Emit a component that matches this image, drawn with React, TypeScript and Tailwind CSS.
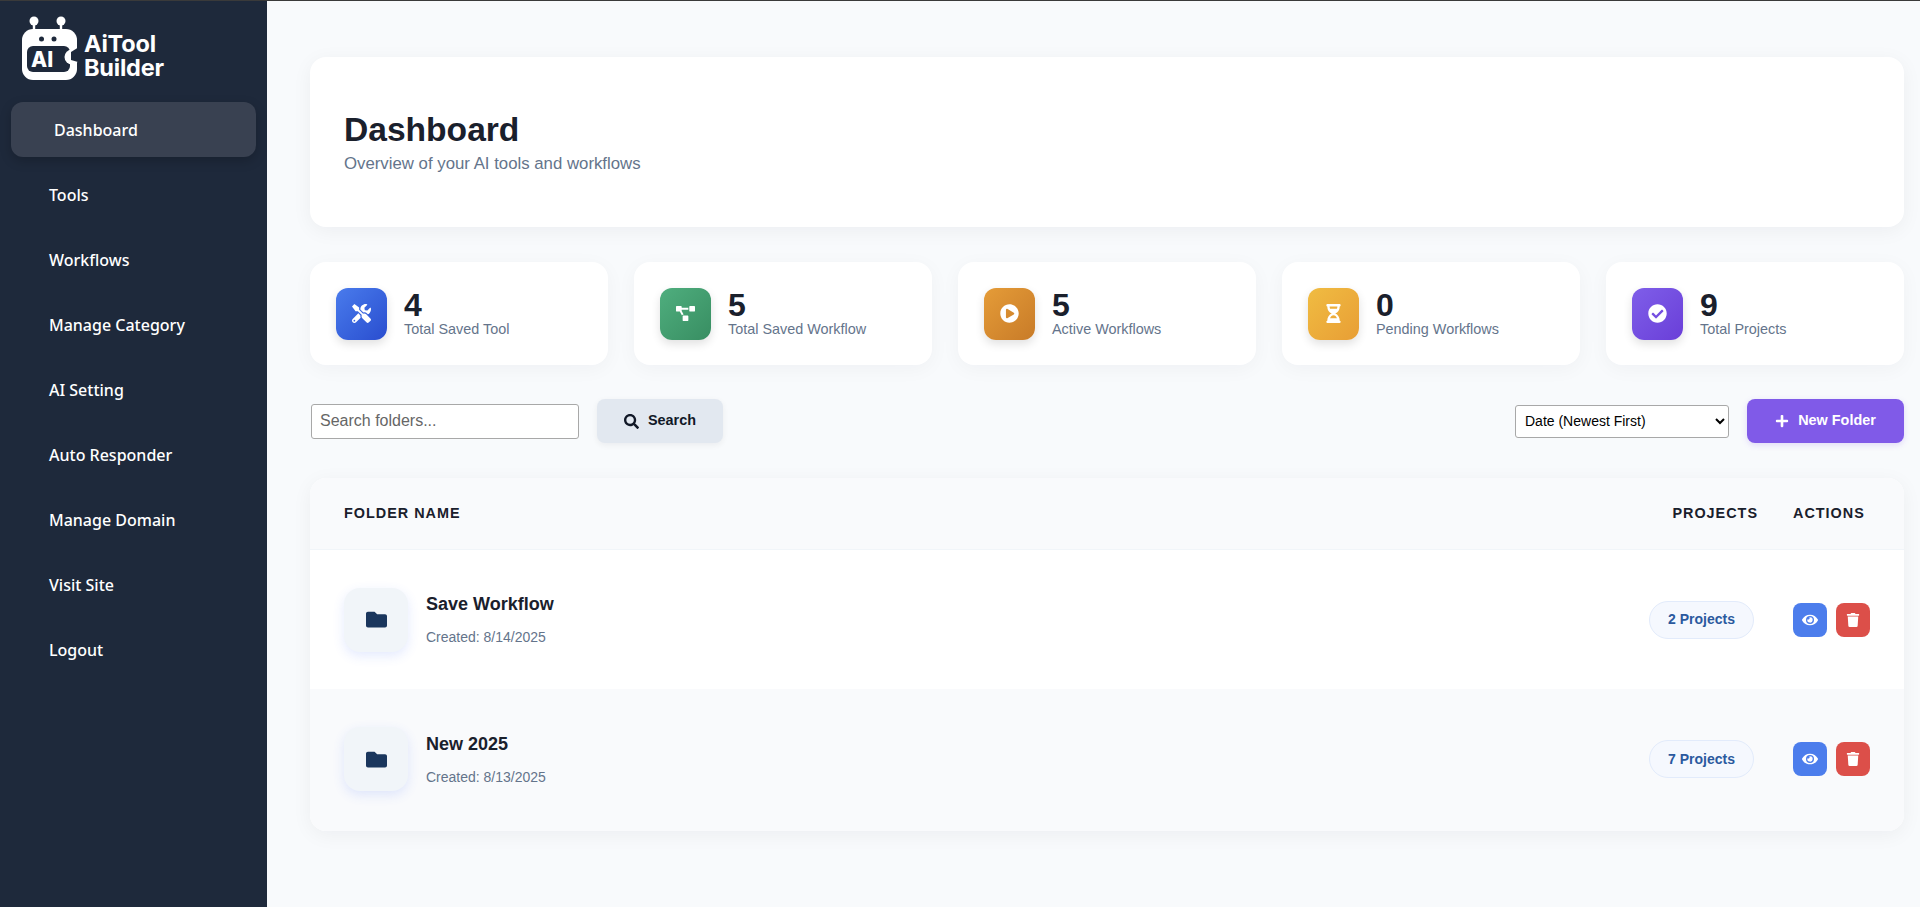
import { FaCheckCircle, FaEye, FaFolder, FaHourglassHalf, FaPlayCircle, FaPlus, FaProjectDiagram, FaSearch, FaTools, FaTrash } from 'react-icons/fa'

const navItems = ['Tools', 'Workflows', 'Manage Category', 'AI Setting', 'Auto Responder', 'Manage Domain', 'Visit Site', 'Logout']

const stats = [
  { value: '4', label: 'Total Saved Tool', icon: <FaTools className="h-[19px] w-[19px]" />, color: 'bg-gradient-to-br from-[#4a7bec] to-[#2a4dcf]' },
  { value: '5', label: 'Total Saved Workflow', icon: <FaProjectDiagram className="h-[19px] w-[19px]" />, color: 'bg-gradient-to-br from-[#4fae7e] to-[#388e62]' },
  { value: '5', label: 'Active Workflows', icon: <FaPlayCircle className="h-[19px] w-[19px]" />, color: 'bg-gradient-to-br from-[#e59c38] to-[#c87b28]' },
  { value: '0', label: 'Pending Workflows', icon: <FaHourglassHalf className="h-[19px] w-[19px]" />, color: 'bg-gradient-to-br from-[#f0bc42] to-[#e89e35]' },
  { value: '9', label: 'Total Projects', icon: <FaCheckCircle className="h-[19px] w-[19px]" />, color: 'bg-gradient-to-br from-[#7f5ee9] to-[#6a3ed8]' },
]

const folders = [
  { name: 'Save Workflow', created: 'Created: 8/14/2025', projects: '2 Projects', rowClass: 'bg-white h-[139px]' },
  { name: 'New 2025', created: 'Created: 8/13/2025', projects: '7 Projects', rowClass: 'bg-[#f9fafc] h-[142px] pb-[2px]' },
]

function Logo() {
  return (
    <div className="flex h-[101px] items-start pl-[22px] pt-[14px]">
      <svg width="58" height="66" viewBox="0 0 58 66" className="shrink-0">
        <circle cx="12" cy="6" r="4.5" fill="#fff" />
        <circle cx="39" cy="6" r="4.5" fill="#fff" />
        <rect x="10.8" y="8" width="2.4" height="8" fill="#fff" />
        <rect x="37.8" y="8" width="2.4" height="8" fill="#fff" />
        <rect x="0" y="14" width="55" height="51" rx="11" fill="#fff" />
        <circle cx="19.5" cy="24" r="2.5" fill="#1e293b" />
        <circle cx="32" cy="24" r="2.5" fill="#1e293b" />
        <rect x="5" y="31" width="43" height="26" rx="6" fill="#1e293b" />
        <circle cx="50" cy="42" r="7.5" fill="#fff" />
        <path d="M57 32 L49 37 L49 45 L56 47 L58 46 L58 32 Z" fill="#1e293b" />
        <text x="9" y="52" fill="#fff" fontFamily="Inter, sans-serif" fontSize="21" fontWeight="800">AI</text>
      </svg>
      <div className="ml-[4px] mt-[17px] text-[23.5px] font-bold leading-[24px] tracking-[-0.2px] text-white font-['Inter',sans-serif]">
        <div>AiTool</div>
        <div>Builder</div>
      </div>
    </div>
  )
}

function Sidebar() {
  return (
    <aside className="flex w-[267px] shrink-0 flex-col bg-[#1e293b] font-['Noto_Sans',sans-serif] text-[16px] font-medium text-white">
      <Logo />
      <nav className="flex flex-col">
        <a className="mx-[11px] flex h-[55px] items-center rounded-xl bg-[#394151] pl-[43px] shadow-[0_4px_12px_rgba(0,0,0,0.2)]">Dashboard</a>
        {navItems.map((item) => (
          <a key={item} className="mt-[10px] flex h-[55px] items-center pl-[49px] first:mt-[11px]">
            {item}
          </a>
        ))}
      </nav>
    </aside>
  )
}

function StatCard({ value, label, icon, color }: (typeof stats)[number]) {
  return (
    <div className="flex h-[103px] items-center gap-[17px] rounded-2xl bg-white pl-[26px] shadow-[0_4px_20px_rgba(15,23,42,0.04)]">
      <div className={`flex h-[52px] w-[51px] items-center justify-center rounded-xl text-white shadow-[0_4px_10px_rgba(0,0,0,0.12)] ${color}`}>
        {icon}
      </div>
      <div className="flex flex-col">
        <span className="text-[32px] font-bold leading-[32px] text-[#1a202c]">{value}</span>
        <span className="text-[14.4px] leading-[17px] text-[#64748b]">{label}</span>
      </div>
    </div>
  )
}

function FolderRow({ name, created, projects, rowClass }: (typeof folders)[number]) {
  return (
    <div className={`flex items-center pl-[34px] pr-[34px] ${rowClass}`}>
      <div className="flex h-[64px] w-[64px] items-center justify-center rounded-2xl bg-[#f1f5f9] text-[#1a365d] shadow-[0_4px_12px_rgba(66,108,245,0.14)]">
        <FaFolder className="h-[21px] w-[21px]" />
      </div>
      <div className="ml-[18px] flex-1">
        <div className="text-[18px] font-bold leading-[21px] text-[#1a202c]">{name}</div>
        <div className="mt-[14px] text-[14px] leading-[16px] text-[#64748b]">{created}</div>
      </div>
      <div className="w-[109px]">
        <span className="flex h-[38px] w-[105px] items-center justify-center rounded-full border border-[#e2ebfb] bg-[#f5f8fe] text-[14px] font-bold text-[#2b5a9e]">
          {projects}
        </span>
      </div>
      <div className="ml-[35px] flex w-[77px] gap-[9px]">
        <button className="flex h-[34px] w-[34px] items-center justify-center rounded-lg bg-[#4c7dec] text-white">
          <FaEye className="h-[16px] w-[16px]" />
        </button>
        <button className="flex h-[34px] w-[34px] items-center justify-center rounded-lg bg-[#dc4f49] text-white">
          <FaTrash className="h-[14px] w-[14px]" />
        </button>
      </div>
    </div>
  )
}

export default function App() {
  return (
    <div className="flex h-[907px] flex-col overflow-hidden bg-[#f8fafc] font-['Liberation_Sans',Arial,sans-serif]">
      <div className="h-px w-full shrink-0 bg-[#3a3a3a]" />
      <div className="flex flex-1">
        <Sidebar />
        <main className="flex-1 pl-[43px] pr-[16px] pt-[56px]">
          <section className="flex h-[170px] flex-col justify-center rounded-2xl bg-white px-[34px] shadow-[0_4px_20px_rgba(15,23,42,0.05)]">
            <h1 className="text-[33.6px] font-bold leading-[40px] text-[#1a202c]">Dashboard</h1>
            <p className="mt-[4px] text-[16.8px] leading-[20px] text-[#64748b]">Overview of your AI tools and workflows</p>
          </section>

          <section className="mt-[35px] grid grid-cols-5 gap-[26px]">
            {stats.map((stat) => (
              <StatCard key={stat.label} {...stat} />
            ))}
          </section>

          <section className="mt-[34px] flex h-[44px] items-center">
            <input
              placeholder="Search folders..."
              className="ml-px h-[35px] w-[268px] rounded-[3px] border border-[#a8a8a8] bg-white px-[8px] text-[16px] text-black placeholder:text-[#666]"
            />
            <button className="ml-[18px] flex h-[44px] w-[126px] items-center justify-center gap-[9px] rounded-lg bg-[#e2e8f0] text-[14.4px] font-bold text-[#111827] shadow-[0_2px_6px_rgba(15,23,42,0.06)]">
              <FaSearch className="h-[15px] w-[15px]" />
              Search
            </button>
            <select className="ml-auto h-[33px] w-[214px] rounded-[3px] border border-[#a8a8a8] bg-white pl-[5px] text-[14px] text-black">
              <option>Date (Newest First)</option>
            </select>
            <button className="ml-[18px] flex h-[44px] w-[157px] items-center justify-center gap-[9px] rounded-lg bg-[#805ae8] text-[14.4px] font-bold text-white shadow-[0_2px_6px_rgba(128,90,232,0.2)]">
              <FaPlus className="h-[14px] w-[14px]" />
              New Folder
            </button>
          </section>

          <section className="mt-[35px] overflow-hidden rounded-2xl bg-white shadow-[0_4px_20px_rgba(15,23,42,0.05)]">
            <div className="flex h-[72px] items-center border-b border-[#f1f5f9] bg-[#f9fafc] px-[34px] text-[14.4px] font-bold uppercase tracking-[1px] text-[#1a202c]">
              <span className="flex-1">Folder Name</span>
              <span className="w-[109px] text-right">Projects</span>
              <span className="ml-[35px] w-[77px]">Actions</span>
            </div>
            {folders.map((folder) => (
              <FolderRow key={folder.name} {...folder} />
            ))}
          </section>
        </main>
      </div>
    </div>
  )
}
